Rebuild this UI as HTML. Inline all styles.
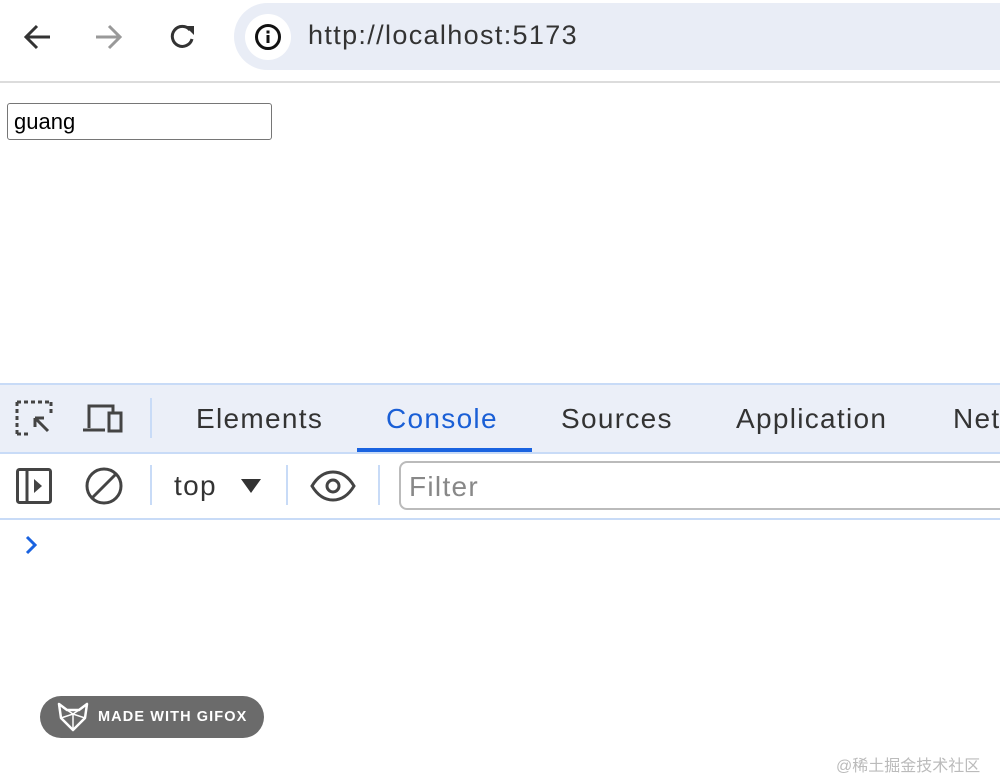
<!DOCTYPE html>
<html style="overflow:hidden"><head><style>
html,body{overflow:hidden}
body{margin:0;width:1000px;height:778px;position:relative;background:#fff;font-family:"Liberation Sans",Arial,sans-serif}
.a{position:absolute}
.t{font-size:28px;letter-spacing:1.3px}
</style></head><body>
<svg class="a" style="left:20px;top:20px" width="36" height="34" viewBox="0 0 36 34"><path d="M30 17H6M17 6L6 17l11 11" stroke="#333" stroke-width="3" fill="none"/></svg>
<svg class="a" style="left:92px;top:20px" width="36" height="34" viewBox="0 0 36 34"><path d="M4 17h24M17 6l11 11-11 11" stroke="#999" stroke-width="3" fill="none"/></svg>
<svg class="a" style="left:166px;top:20px" width="32" height="34" viewBox="0 0 32 34"><path d="M24 10A10 10 0 1 0 26 19" stroke="#333" stroke-width="3" fill="none"/><path d="M19 6h9v9z" fill="#333"/></svg>
<div class="a" style="left:234px;top:3px;width:766px;height:67px;border-radius:34px 0 0 34px;background:#e9edf6"></div>
<div class="a" style="left:245px;top:14px;width:46px;height:46px;border-radius:50%;background:#fff"></div>
<svg class="a" style="left:254px;top:23px" width="28" height="28" viewBox="0 0 28 28"><circle cx="14" cy="14" r="11.5" stroke="#111" stroke-width="3" fill="none"/><rect x="12.5" y="12" width="3" height="8" fill="#111"/><rect x="12.5" y="7.5" width="3" height="3" fill="#111"/></svg>
<div class="a" style="left:308px;top:20px;font-size:27px;letter-spacing:1.35px;color:#333">http://localhost:5173</div>
<div class="a" style="left:0;top:81px;width:1000px;height:2px;background:#dcdcdc"></div>
<div class="a" style="left:7px;top:103px;width:263px;height:35px;border:1px solid #767676;border-radius:3px"></div>
<div class="a" style="left:14px;top:109px;font-size:22px;color:#000">guang</div>
<div class="a" style="left:0;top:383px;width:1000px;height:67px;background:#ebeff8;border-top:2px solid #c8dbf7;border-bottom:2px solid #c8dbf7"></div>
<svg class="a" style="left:15px;top:400px" width="40" height="36" viewBox="0 0 40 36"><path d="M2 2h34M2 2v32M2 34h12M36 2v12" stroke="#444" stroke-width="3" stroke-dasharray="4 3" fill="none"/><path d="M20 18l13 13M20 18v9M20 18h9" stroke="#444" stroke-width="3" fill="none"/></svg>
<svg class="a" style="left:83px;top:402px" width="42" height="32" viewBox="0 0 42 32"><path d="M6 26V4h24v6M0 28h22" stroke="#444" stroke-width="3" fill="none"/><rect x="26" y="11" width="12" height="18" stroke="#444" stroke-width="3" fill="none"/></svg>
<div class="a" style="left:150px;top:398px;width:2px;height:40px;background:#c8dbf7"></div>
<div class="a t" style="left:196px;top:403px;color:#333">Elements</div>
<div class="a t" style="left:386px;top:403px;color:#1a5fd6">Console</div>
<div class="a" style="left:357px;top:448px;width:175px;height:4px;background:#1a63e0"></div>
<div class="a t" style="left:561px;top:403px;color:#333">Sources</div>
<div class="a t" style="left:736px;top:403px;color:#333">Application</div>
<div class="a t" style="left:953px;top:403px;color:#333;white-space:nowrap">Net</div>
<svg class="a" style="left:16px;top:468px" width="36" height="36" viewBox="0 0 36 36"><rect x="1.5" y="1.5" width="33" height="33" rx="2" stroke="#444" stroke-width="3" fill="none"/><path d="M11 2v32" stroke="#444" stroke-width="3"/><path d="M18 11l8 7-8 7z" fill="#444"/></svg>
<svg class="a" style="left:84px;top:466px" width="40" height="40" viewBox="0 0 40 40"><circle cx="20" cy="20" r="17" stroke="#444" stroke-width="3" fill="none"/><path d="M8 32L32 8" stroke="#444" stroke-width="3"/></svg>
<div class="a" style="left:150px;top:465px;width:2px;height:40px;background:#c8dbf7"></div>
<div class="a t" style="left:174px;top:470px;color:#333">top</div>
<svg class="a" style="left:240px;top:478px" width="22" height="16" viewBox="0 0 22 16"><path d="M1 1h20L11 15z" fill="#333"/></svg>
<div class="a" style="left:286px;top:465px;width:2px;height:40px;background:#c8dbf7"></div>
<svg class="a" style="left:310px;top:470px" width="46" height="32" viewBox="0 0 46 32"><path d="M2 16C8 6 15 2 23 2s15 4 21 14C38 26 31 30 23 30S8 26 2 16z" stroke="#444" stroke-width="3" fill="none"/><circle cx="23" cy="16" r="6" stroke="#444" stroke-width="3" fill="none"/></svg>
<div class="a" style="left:378px;top:465px;width:2px;height:40px;background:#c8dbf7"></div>
<div class="a" style="left:399px;top:461px;width:620px;height:45px;border:2px solid #bbb;border-right:none;border-radius:8px 0 0 8px"></div>
<div class="a t" style="left:409px;top:471px;color:#888">Filter</div>
<div class="a" style="left:0;top:518px;width:1000px;height:2px;background:#c8dbf7"></div>
<svg class="a" style="left:24px;top:534px" width="16" height="22" viewBox="0 0 16 22"><path d="M3 3l8 8-8 8" stroke="#1a63e0" stroke-width="3" fill="none"/></svg>
<div class="a" style="left:40px;top:696px;width:224px;height:42px;border-radius:21px;background:#6b6b6b"></div>
<svg class="a" style="left:57px;top:702px" width="32" height="30" viewBox="0 0 32 30"><path d="M2 2l8 6h12l8-6-2 14-12 12L4 16z" stroke="#fff" stroke-width="2.5" fill="none" stroke-linejoin="round"/><path d="M4 16l12-4 12 4M16 12v16M10 8l6 4 6-4" stroke="#fff" stroke-width="1.5" fill="none"/></svg>
<div class="a" style="left:98px;top:709px;font-size:14.5px;font-weight:bold;color:#fff;letter-spacing:1.1px">MADE WITH GIFOX</div>
<div class="a" style="left:836px;top:752px;font-size:16px;color:#bbb;font-family:'Liberation Sans','Noto Sans CJK SC',sans-serif">@稀土掘金技术社区</div>
</body></html>
